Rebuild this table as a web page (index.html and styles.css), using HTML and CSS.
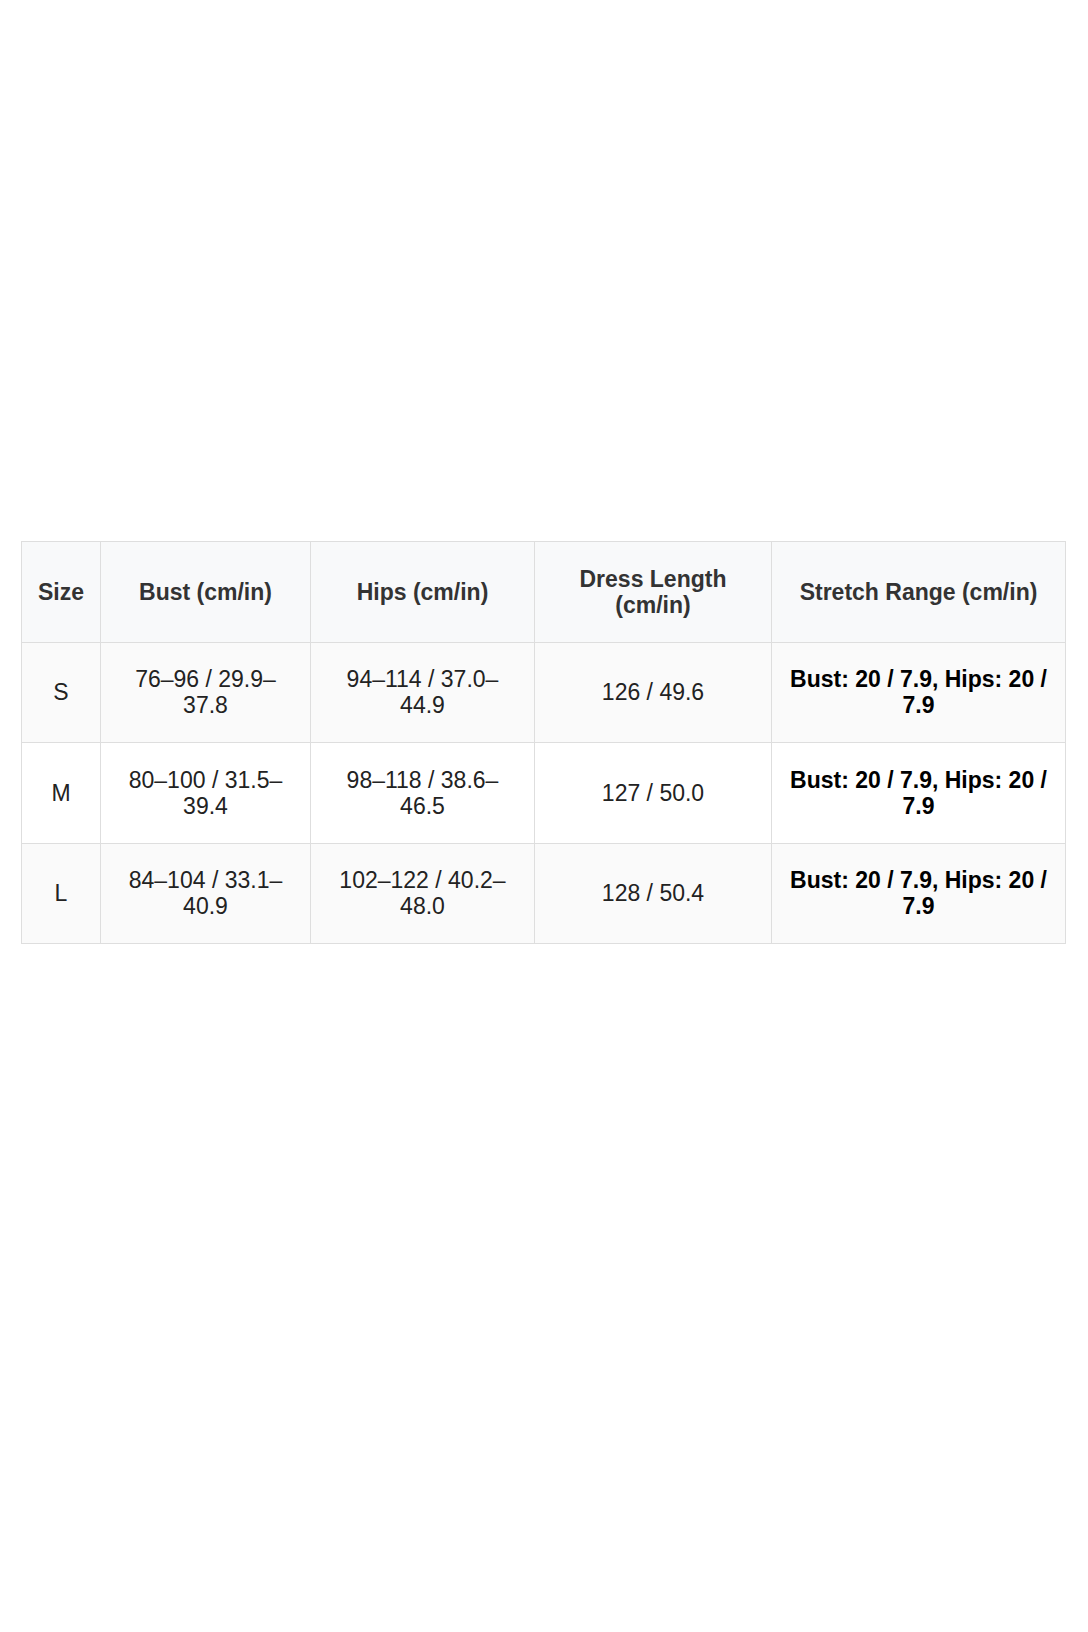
FILE: index.html
```html
<!DOCTYPE html>
<html lang="en">
<head>
<meta charset="utf-8">
<title>Size Chart</title>
<link rel="stylesheet" href="styles.css">
</head>
<body>
<main class="page">
  <table class="size-table">
    <colgroup>
      <col class="c-size">
      <col class="c-bust">
      <col class="c-hips">
      <col class="c-length">
      <col class="c-stretch">
    </colgroup>
    <thead>
      <tr>
        <th>Size</th>
        <th>Bust (cm/in)</th>
        <th>Hips (cm/in)</th>
        <th>Dress Length (cm/in)</th>
        <th>Stretch Range (cm/in)</th>
      </tr>
    </thead>
    <tbody>
      <tr class="alt">
        <td>S</td>
        <td>76–96 / 29.9–37.8</td>
        <td>94–114 / 37.0–44.9</td>
        <td>126 / 49.6</td>
        <td class="strong">Bust: 20 / 7.9, Hips: 20 / 7.9</td>
      </tr>
      <tr>
        <td>M</td>
        <td>80–100 / 31.5–39.4</td>
        <td>98–118 / 38.6–46.5</td>
        <td>127 / 50.0</td>
        <td class="strong">Bust: 20 / 7.9, Hips: 20 / 7.9</td>
      </tr>
      <tr class="alt">
        <td>L</td>
        <td>84–104 / 33.1–40.9</td>
        <td>102–122 / 40.2–48.0</td>
        <td>128 / 50.4</td>
        <td class="strong">Bust: 20 / 7.9, Hips: 20 / 7.9</td>
      </tr>
    </tbody>
  </table>
</main>
</body>
</html>
```
FILE: styles.css
```css
html, body {
  margin: 0;
  padding: 0;
  background: #ffffff;
}

.page {
  padding: 541px 23px 0 21px;
  min-height: 1632px;
  box-sizing: border-box;
}

.size-table {
  width: 1044px;
  table-layout: fixed;
  border-collapse: collapse;
  font-family: "Liberation Sans", Arial, sans-serif;
  font-size: 23px;
  line-height: 26px;
  color: #222222;
}

.c-size { width: 79px; }
.c-bust { width: 210px; }
.c-hips { width: 224px; }
.c-length { width: 237px; }
.c-stretch { width: 294px; }

.size-table th,
.size-table td {
  border: 1px solid #dedede;
  padding: 23.75px 15px;
  text-align: center;
  vertical-align: middle;
}

.size-table th {
  background: #f8f9fa;
  color: #333333;
  font-weight: bold;
}

.size-table tr.alt td {
  background: #fafafa;
}

.size-table td.strong {
  font-weight: bold;
  color: #000000;
}
```
